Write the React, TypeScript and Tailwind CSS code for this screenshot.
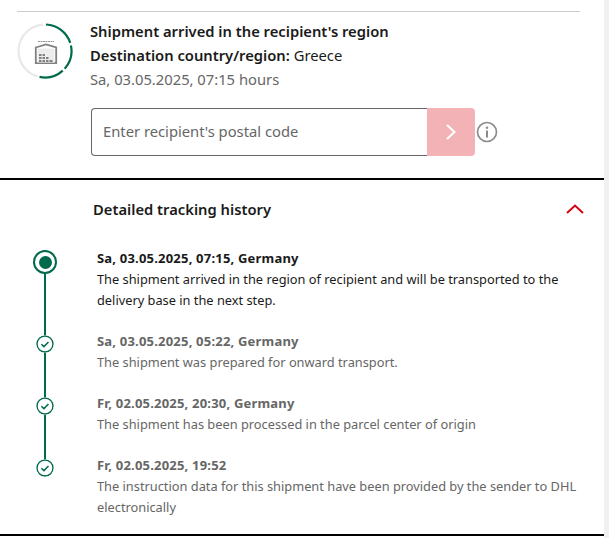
const font = { fontFamily: '"Noto Sans", sans-serif' }

const HISTORY = [
  {
    title: 'Sa, 03.05.2025, 07:15, Germany',
    text: 'The shipment arrived in the region of recipient and will be transported to the delivery base in the next step.',
    current: true,
  },
  {
    title: 'Sa, 03.05.2025, 05:22, Germany',
    text: 'The shipment was prepared for onward transport.',
  },
  {
    title: 'Fr, 02.05.2025, 20:30, Germany',
    text: 'The shipment has been processed in the parcel center of origin',
  },
  {
    title: 'Fr, 02.05.2025, 19:52',
    text: 'The instruction data for this shipment have been provided by the sender to DHL electronically',
    last: true,
  },
]

const arc = (r: number, from: number, to: number) => {
  const p = (deg: number) => {
    const a = ((deg - 90) * Math.PI) / 180
    return `${(28 + r * Math.cos(a)).toFixed(2)} ${(28 + r * Math.sin(a)).toFixed(2)}`
  }
  return `M${p(from)} A${r} ${r} 0 ${to - from > 180 ? 1 : 0} 1 ${p(to)}`
}

const StatusRing = () => (
  <svg width="56" height="56" viewBox="0 0 56 56" fill="none" className="mt-[4px] shrink-0">
    <path d={arc(26.5, 196, 356)} stroke="#e8e8e8" strokeWidth="2.2" />
    <path d={arc(26.5, 2, 72)} stroke="#006a4d" strokeWidth="2.2" />
    <path d={arc(26.5, 78, 132)} stroke="#006a4d" strokeWidth="2.2" />
    <path d={arc(26.5, 138, 192)} stroke="#006a4d" strokeWidth="2.2" />
    <path d="M21 18.5h16" stroke="#999" strokeWidth="1" strokeDasharray="2 .5" />
    <path d="M18.8 24.5l10.2-3 10.2 3v15.7H18.8z" fill="#fff" stroke="#808080" strokeWidth="1.8" />
    <path d="M20.5 25.5h17v14h-17z" fill="#ececec" />
    <path d="M22 31h2.5v2H22zM25.5 31H28v2h-2.5zM22 34h2.5v2H22zM25.5 34H28v2h-2.5zM29 34h2.5v2H29zM22 37h2.5v2H22zM25.5 37H28v2h-2.5zM29 37h2.5v2H29zM32.5 37h3v2h-3z" fill="#808080" />
  </svg>
)

const CheckDot = () => (
  <svg width="18" height="18" viewBox="0 0 18 18" fill="none" className="relative rounded-full bg-white">
    <circle cx="9" cy="9" r="8" stroke="#006a4d" strokeWidth="1.4" />
    <path d="M5.4 9.2l2.5 2.4 4.6-4.6" stroke="#006a4d" strokeWidth="1.5" />
  </svg>
)

const CurrentDot = () => (
  <div className="relative flex h-[24px] w-[24px] items-center justify-center rounded-full border-2 border-[#006a4d] bg-white">
    <div className="h-[13px] w-[13px] rounded-full bg-[#006a4d]" />
  </div>
)

export default function App() {
  return (
    <div style={font} className="h-[538px] w-[609px] overflow-hidden border-r-[5px] border-[#f0f0f0] bg-white">
      <div className="pt-[11px] pl-[17px] pr-[24px]">
        <div className="border-t border-[#cccccc]" />
        <div className="flex pt-[7px]">
          <StatusRing />
          <div className="ml-[17px] text-[14.75px] leading-[24px] text-[#1a1a1a]">
            <div className="font-semibold">Shipment arrived in the recipient's region</div>
            <div>
              <span className="font-semibold">Destination country/region:</span> Greece
            </div>
            <div className="text-[#666666]">Sa, 03.05.2025, 07:15 hours</div>
          </div>
        </div>
        <div className="mt-[17px] ml-[74px] flex items-center">
          <div className="flex h-[48px] w-[336px] items-center rounded-l-[4px] border border-r-0 border-[#666666] pb-[2px] pl-[11px] text-[14.75px] text-[#666666]">
            Enter recipient's postal code
          </div>
          <div className="flex h-[48px] w-[48px] items-center justify-center rounded-r-[4px] bg-[#f3b2b6]">
            <svg width="12" height="18" viewBox="0 0 12 18" fill="none">
              <path d="M2 2l7.5 7L2 16" stroke="#fff" strokeWidth="2" />
            </svg>
          </div>
          <svg width="22" height="22" viewBox="0 0 22 22" fill="none" className="ml-[1px]">
            <circle cx="11" cy="11" r="9.5" stroke="#8c8c8c" strokeWidth="1.7" />
            <circle cx="11" cy="6.8" r="1.2" fill="#8c8c8c" />
            <path d="M11 9.5v7" stroke="#8c8c8c" strokeWidth="2" />
          </svg>
        </div>
      </div>

      <div className="mt-[22px] border-t-2 border-black" />

      <div className="flex items-center justify-between pt-[18px] pl-[93px] pr-[20px] text-[14.75px] leading-[22px] font-semibold text-[#1a1a1a]">
        <span>Detailed tracking history</span>
        <svg width="18" height="10" viewBox="0 0 18 10" fill="none">
          <path d="M1 9l8-7.5L17 9" stroke="#d40511" strokeWidth="2" />
        </svg>
      </div>

      <div className="mt-[28px] pl-[33px] pr-[24px]">
        {HISTORY.map((item) => (
          <div key={item.title} className="flex">
            <div className="relative flex w-[24px] shrink-0 flex-col items-center pt-[2px]">
              {!item.last && <div className="absolute top-[2px] bottom-[-4px] w-[2px] bg-[#006a4d]" />}
              {item.current ? (
                <CurrentDot />
              ) : (
                <div className="mt-[2px]">
                  <CheckDot />
                </div>
              )}
            </div>
            <div
              className={`ml-[40px] pb-[20px] text-[12.8px] leading-[21px] ${
                item.current ? 'text-[#1a1a1a]' : 'text-[#666666]'
              }`}
            >
              <div className="text-[13px] font-bold tracking-[0.2px]">{item.title}</div>
              <div>{item.text}</div>
            </div>
          </div>
        ))}
      </div>
      <div className="-mt-[4px] border-t-2 border-black" />
    </div>
  )
}
